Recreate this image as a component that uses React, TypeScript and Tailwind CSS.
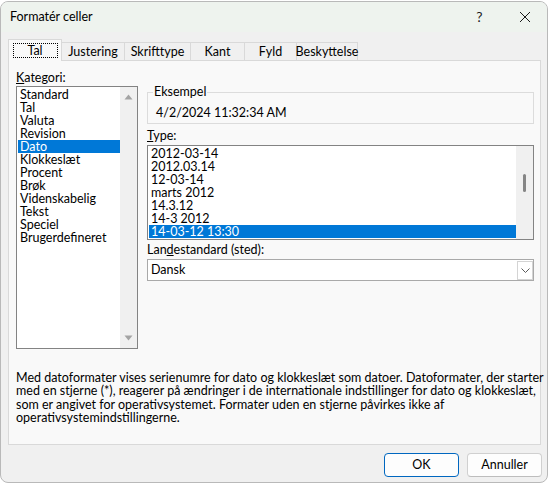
import React from "react";

const categories = [
  "Standard",
  "Tal",
  "Valuta",
  "Revision",
  "Dato",
  "Klokkeslæt",
  "Procent",
  "Brøk",
  "Videnskabelig",
  "Tekst",
  "Speciel",
  "Brugerdefineret",
];

const types = [
  "2012-03-14",
  "2012.03.14",
  "12-03-14",
  "marts 2012",
  "14.3.12",
  "14-3 2012",
  "14-03-12 13:30",
];

const tabs: { label: string; w: string }[] = [
  { label: "Justering", w: "w-[64px]" },
  { label: "Skrifttype", w: "w-[67px]" },
  { label: "Kant", w: "w-[55px]" },
  { label: "Fyld", w: "w-[53px]" },
  { label: "Beskyttelse", w: "w-[62px]" },
];

function Arrow({ up }: { up: boolean }) {
  return (
    <svg width="9" height="6" viewBox="0 0 9 6">
      {up ? (
        <path d="M0.5 5.5 L4.5 0.5 L8.5 5.5 Z" fill="#a3a3a3" />
      ) : (
        <path d="M0.5 0.5 L4.5 5.5 L8.5 0.5 Z" fill="#a3a3a3" />
      )}
    </svg>
  );
}

export default function App() {
  return (
    <div className="w-[550px] h-[484px] bg-white font-['Lato',sans-serif] text-[12.5px] text-black overflow-hidden">
      <div className="mt-[1px] w-[548px] h-[482px] border border-[#b9b9b9] rounded-[8px] bg-[#f0f0f0] flex flex-col overflow-hidden">
        {/* Title bar */}
        <div className="h-[30px] bg-[#eef3ee] flex items-center shrink-0">
          <div className="pl-[9px] flex-1 leading-[16px]">Formatér celler</div>
          <div className="w-[45px] h-[30px] flex items-center justify-center text-[14px] leading-none text-[#1a1a1a]">
            ?
          </div>
          <div className="w-[45px] h-[30px] flex items-center justify-center">
            <svg width="12" height="12" viewBox="0 0 12 12">
              <path d="M1 1 L11 11 M11 1 L1 11" stroke="#1a1a1a" strokeWidth="1" />
            </svg>
          </div>
        </div>

        {/* Tabs */}
        <div className="mt-[7px] ml-[7px] h-[21px] flex items-end shrink-0">
          <div className="relative z-10 w-[54px] h-[22px] -mb-[1px] border border-b-0 border-[#d9d9d9] bg-[#f9f9f9] flex items-center justify-center">
            <div className="border border-dotted border-black h-[15px] w-[45px] flex items-center justify-center leading-[13px]">
              Tal
            </div>
          </div>
          {tabs.map((t) => (
            <div
              key={t.label}
              className={`${t.w} h-[18px] -ml-[1px] border border-b-0 border-[#d9d9d9] bg-[#f0f0f0] flex items-center justify-center leading-[14px]`}
            >
              {t.label}
            </div>
          ))}
        </div>

        {/* Panel */}
        <div className="ml-[7px] w-[533px] h-[385px] border border-[#d9d9d9] bg-[#f9f9f9] flex flex-col shrink-0">
          <div className="flex pl-[7px] pt-[9px]">
            {/* Left column */}
            <div className="w-[122px] flex flex-col">
              <div className="h-[15px] leading-[15px]">
                <span className="underline">K</span>ategori:
              </div>
              <div className="mt-[1px] h-[263px] border border-[#838383] bg-white flex">
                <div className="w-[102px] ml-[1px] pt-[1px] flex flex-col">
                  {categories.map((c) => (
                    <div
                      key={c}
                      className={`h-[13px] leading-[13px] pl-[2px] whitespace-nowrap ${
                        c === "Dato" ? "bg-[#0078d7] text-white" : ""
                      }`}
                    >
                      {c}
                    </div>
                  ))}
                </div>
                <div className="w-[17px] bg-[#f0f0f0] flex flex-col items-center justify-between py-[7px]">
                  <Arrow up={true} />
                  <Arrow up={false} />
                </div>
              </div>
            </div>

            {/* Right column */}
            <div className="ml-[9px] w-[387px] flex flex-col">
              <div className="relative mt-[22px] h-[32px] border border-[#dcdcdc]">
                <span className="absolute -top-[8px] left-[5px] px-[1px] bg-[#f9f9f9] leading-[14px]">
                  Eksempel
                </span>
                <div className="pl-[8px] pt-[13px] leading-[14px]">4/2/2024 11:32:34 AM</div>
              </div>

              <div className="mt-[5px] h-[14px] leading-[14px]">
                <span className="underline">T</span>ype:
              </div>
              <div className="mt-[2px] h-[95px] border border-[#838383] bg-white flex">
                <div className="w-[367px] ml-[1px] pt-[1px] flex flex-col">
                  {types.map((t, i) => (
                    <div
                      key={t}
                      className={`h-[13px] leading-[13px] pl-[2px] whitespace-nowrap ${
                        i === types.length - 1 ? "bg-[#0078d7] text-white" : ""
                      }`}
                    >
                      {t}
                    </div>
                  ))}
                </div>
                <div className="w-[17px] bg-[#f0f0f0] flex justify-center">
                  <div className="mt-[28px] w-[3px] h-[18px] rounded-full bg-[#858585]" />
                </div>
              </div>

              <div className="mt-[3px] h-[14px] leading-[14px]">
                Lan<span className="underline">d</span>estandard (sted):
              </div>
              <div className="mt-[2px] h-[22px] border border-[#a9a9a9] bg-white flex items-center">
                <div className="flex-1 pl-[3px] leading-[14px]">Dansk</div>
                <div className="w-[16px] h-[19px] border border-[#d4d4d4] bg-white flex items-center justify-center">
                  <svg width="9" height="5" viewBox="0 0 9 5">
                    <path d="M0.5 0.5 L4.5 4.5 L8.5 0.5" stroke="#5a5a5a" strokeWidth="1" fill="none" />
                  </svg>
                </div>
              </div>
            </div>
          </div>

          {/* Description */}
          <div className="mt-[22px] pl-[7px] leading-[13.4px] whitespace-nowrap">
            <div>Med datoformater vises serienumre for dato og klokkeslæt som datoer. Datoformater, der starter</div>
            <div>med en stjerne (*), reagerer på ændringer i de internationale indstillinger for dato og klokkeslæt,</div>
            <div>som er angivet for operativsystemet. Formater uden en stjerne påvirkes ikke af</div>
            <div>operativsystemindstillingerne.</div>
          </div>
        </div>

        {/* Buttons */}
        <div className="mt-[8px] flex justify-end pr-[5px] gap-[8px]">
          <div className="w-[75px] h-[24px] rounded-[4px] border border-[#0067c0] bg-[#fdfdfd] flex items-center justify-center leading-[14px]">
            OK
          </div>
          <div className="w-[75px] h-[24px] rounded-[4px] border border-[#d0d0d0] border-b-[#bdbdbd] bg-[#fdfdfd] flex items-center justify-center leading-[14px]">
            Annuller
          </div>
        </div>
      </div>
    </div>
  );
}
